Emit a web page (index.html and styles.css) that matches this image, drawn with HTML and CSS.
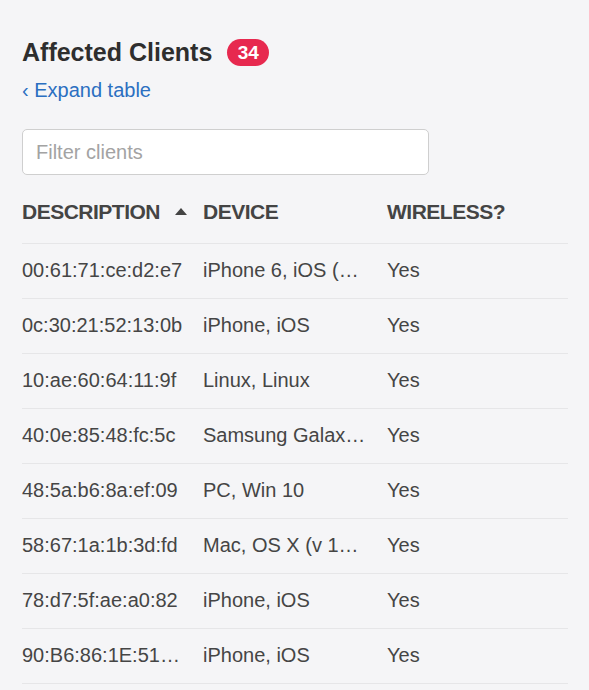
FILE: index.html
```html
<!DOCTYPE html>
<html lang="en">
<head>
<meta charset="utf-8">
<title>Affected Clients</title>
<link rel="stylesheet" href="styles.css">
</head>
<body>
<section class="panel">
  <div class="title-row">
    <h2 class="title">Affected Clients</h2>
    <span class="badge">34</span>
  </div>
  <a class="expand" href="#">&lsaquo; Expand table</a>
  <input class="filter" type="text" placeholder="Filter clients">
  <table class="clients">
    <colgroup>
      <col class="col-desc">
      <col class="col-device">
      <col class="col-wireless">
    </colgroup>
    <thead>
      <tr>
        <th>DESCRIPTION<span class="sort-up"></span></th>
        <th>DEVICE</th>
        <th>WIRELESS?</th>
      </tr>
    </thead>
    <tbody>
      <tr><td>00:61:71:ce:d2:e7</td><td>iPhone 6, iOS (…</td><td>Yes</td></tr>
      <tr><td>0c:30:21:52:13:0b</td><td>iPhone, iOS</td><td>Yes</td></tr>
      <tr><td>10:ae:60:64:11:9f</td><td>Linux, Linux</td><td>Yes</td></tr>
      <tr><td>40:0e:85:48:fc:5c</td><td>Samsung Galax…</td><td>Yes</td></tr>
      <tr><td>48:5a:b6:8a:ef:09</td><td>PC, Win 10</td><td>Yes</td></tr>
      <tr><td>58:67:1a:1b:3d:fd</td><td>Mac, OS X (v 1…</td><td>Yes</td></tr>
      <tr><td>78:d7:5f:ae:a0:82</td><td>iPhone, iOS</td><td>Yes</td></tr>
      <tr><td>90:B6:86:1E:51…</td><td>iPhone, iOS</td><td>Yes</td></tr>
    </tbody>
  </table>
</section>
</body>
</html>
```

FILE: styles.css
```css
html, body {
  margin: 0;
  padding: 0;
  background: #f5f5f7;
}

body {
  font-family: "Liberation Sans", Arial, sans-serif;
  color: #444;
  font-size: 20px;
  line-height: 24px;
}

.panel {
  padding: 37px 21px 0 22px;
  display: flex;
  flex-direction: column;
  align-items: flex-start;
}

.title-row {
  display: flex;
  align-items: center;
  gap: 15px;
  height: 30px;
}

.title {
  margin: 0;
  font-size: 25px;
  line-height: 30px;
  font-weight: bold;
  color: #2e2e2e;
}

.badge {
  display: inline-flex;
  align-items: center;
  justify-content: center;
  height: 27px;
  min-width: 42px;
  padding: 0 8px;
  box-sizing: border-box;
  border-radius: 14px;
  background: #e7294f;
  color: #fff;
  font-weight: bold;
  font-size: 19px;
  line-height: 27px;
}

.expand {
  margin-top: 11px;
  color: #2b6fc1;
  text-decoration: none;
  font-size: 20px;
  line-height: 24px;
}

.filter {
  margin-top: 27px;
  width: 407px;
  height: 46px;
  box-sizing: border-box;
  border: 1px solid #cfcfcf;
  border-radius: 5px;
  background: #fff;
  padding: 0 13px;
  font-family: "Liberation Sans", Arial, sans-serif;
  font-size: 20px;
  color: #444;
  outline: none;
}

.filter::placeholder {
  color: #a3a3a3;
}

.clients {
  margin-top: 25px;
  width: 546px;
  border-collapse: collapse;
  table-layout: fixed;
}

.col-desc { width: 181px; }
.col-device { width: 184px; }

.clients th {
  text-align: left;
  font-size: 21px;
  letter-spacing: -0.5px;
  font-weight: bold;
  color: #444;
  padding: 0 0 19px 0;
  line-height: 24px;
  border-bottom: 1px solid #e6e6e8;
  white-space: nowrap;
}

.sort-up {
  display: inline-block;
  width: 0;
  height: 0;
  margin-left: 15px;
  border-left: 6px solid transparent;
  border-right: 6px solid transparent;
  border-bottom: 7px solid #444;
  vertical-align: 4px;
}

.clients td {
  height: 52px;
  padding: 0 12px 2px 0;
  border-bottom: 1px solid #e6e6e8;
  white-space: nowrap;
  overflow: hidden;
  text-overflow: ellipsis;
  vertical-align: middle;
  color: #454545;
}
```
